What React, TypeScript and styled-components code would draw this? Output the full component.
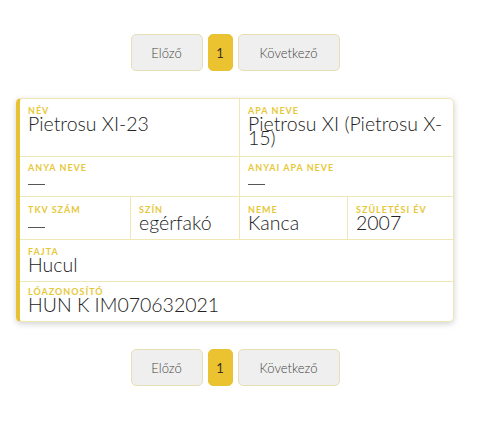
import React from "react";
import styled, { createGlobalStyle } from "styled-components";

const Global = createGlobalStyle`
  html, body { margin: 0; padding: 0; background: #ffffff; }
  body { font-family: Lato, "Open Sans", sans-serif; }
`;

const Page = styled.div`
  width: 438px;
  margin-left: 16px;
  padding-top: 34px;
  display: flex;
  flex-direction: column;
  align-items: stretch;
`;

const Pager = styled.div<{ $mt?: number; $mb?: number }>`
  display: flex;
  justify-content: center;
  gap: 5px;
  margin: ${(p) => `${p.$mt ?? 0}px 0 ${p.$mb ?? 0}px`};
`;

const PageBtn = styled.button<{ $active?: boolean; $w: number }>`
  width: ${(p) => p.$w}px;
  height: 37px;
  box-sizing: border-box;
  border-radius: 5px;
  border: 1px solid ${(p) => (p.$active ? "#e8c235" : "#e6dfb6")};
  background: ${(p) => (p.$active ? "#ebc22f" : "#efefef")};
  color: ${(p) => (p.$active ? "#3a3320" : "#444444")};
  font-family: Lato, sans-serif;
  font-weight: ${(p) => (p.$active ? 400 : 300)};
  font-size: 13px;
  padding: 0;
  cursor: pointer;
`;

const Card = styled.div`
  box-sizing: border-box;
  width: 438px;
  border: 1px solid #efe8b4;
  border-left: 4px solid #e8c235;
  border-radius: 5px;
  background: #fff;
  box-shadow: 0 2px 6px rgba(0, 0, 0, 0.18);
  overflow: hidden;
`;

const Row = styled.div<{ $cols: string; $h: number; $pt: number }>`
  box-sizing: border-box;
  display: grid;
  grid-template-columns: ${(p) => p.$cols};
  height: ${(p) => p.$h}px;
  --pt: ${(p) => p.$pt}px;
  & + & {
    border-top: 1px solid #efe8b4;
  }
`;

const Cell = styled.div`
  box-sizing: border-box;
  padding: var(--pt) 8px 0 8px;
  & + & {
    border-left: 1px solid #efe8b4;
  }
`;

const Label = styled.div`
  font-family: Lato, sans-serif;
  font-weight: 700;
  font-size: 9px;
  line-height: 9px;
  color: #e6c83a;
  text-transform: uppercase;
  letter-spacing: 1px;
  white-space: nowrap;
`;

const Value = styled.div`
  font-family: Lato, sans-serif;
  font-weight: 300;
  font-size: 19.5px;
  line-height: 14px;
  color: #222222;
  margin-top: 2px;
`;

const Dash = styled.div<{ $mt: number }>`
  margin-top: ${(p) => p.$mt}px;
  width: 17px;
  height: 1px;
  background: #555;
`;

function Pagination({ mt, mb }: { mt?: number; mb?: number }) {
  return (
    <Pager $mt={mt} $mb={mb}>
      <PageBtn $w={72}>Előző</PageBtn>
      <PageBtn $w={25} $active>
        1
      </PageBtn>
      <PageBtn $w={102}>Következő</PageBtn>
    </Pager>
  );
}

export default function App() {
  return (
    <>
      <Global />
      <Page>
        <Pagination mb={27} />
        <Card>
          <Row $cols="219px 1fr" $h={57} $pt={7}>
            <Cell>
              <Label>Név</Label>
              <Value>Pietrosu XI-23</Value>
            </Cell>
            <Cell>
              <Label>Apa neve</Label>
              <Value>Pietrosu XI (Pietrosu X-15)</Value>
            </Cell>
          </Row>
          <Row $cols="219px 1fr" $h={40} $pt={6}>
            <Cell>
              <Label>Anya neve</Label>
              <Dash $mt={12} />
            </Cell>
            <Cell>
              <Label>Anyai apa neve</Label>
              <Dash $mt={12} />
            </Cell>
          </Row>
          <Row $cols="110px 109px 108px 1fr" $h={43} $pt={8}>
            <Cell>
              <Label>TKV szám</Label>
              <Dash $mt={13} />
            </Cell>
            <Cell>
              <Label>Szín</Label>
              <Value>egérfakó</Value>
            </Cell>
            <Cell>
              <Label>Neme</Label>
              <Value>Kanca</Value>
            </Cell>
            <Cell>
              <Label>Születési év</Label>
              <Value>2007</Value>
            </Cell>
          </Row>
          <Row $cols="1fr" $h={42} $pt={7}>
            <Cell>
              <Label>Fajta</Label>
              <Value>Hucul</Value>
            </Cell>
          </Row>
          <Row $cols="1fr" $h={40} $pt={5}>
            <Cell>
              <Label>Lóazonosító</Label>
              <Value>HUN K IM070632021</Value>
            </Cell>
          </Row>
        </Card>
        <Pagination mt={27} />
      </Page>
    </>
  );
}
